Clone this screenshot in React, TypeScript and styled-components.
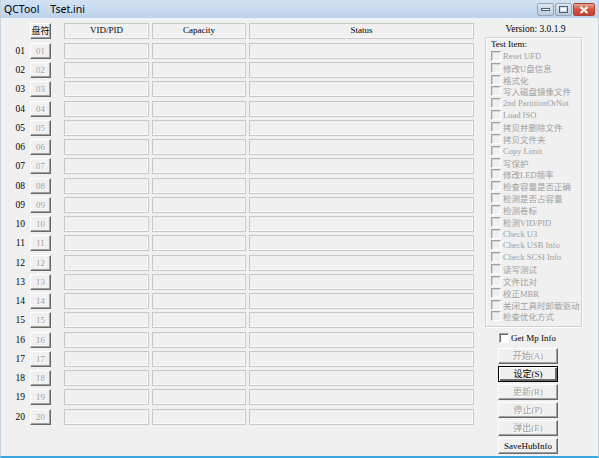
import React from 'react';
import styled, { createGlobalStyle } from 'styled-components';

const GlobalStyle = createGlobalStyle`
  html, body {
    margin: 0;
    padding: 0;
    background: #f0f0f0;
  }
  * { box-sizing: border-box; }
`;

const Window = styled.div`
  width: 599px;
  height: 458px;
  display: flex;
  flex-direction: column;
  background: #f0f0f0;
  border-left: 1px solid #c6d2de;
  border-right: 1px solid #c6d2de;
  border-bottom: 2px solid #3aa6dd;
  overflow: hidden;
  font-family: "Liberation Serif", "Noto Sans CJK SC", serif;
`;

const TitleBar = styled.div`
  height: 18px;
  flex: none;
  display: flex;
  align-items: center;
  padding-left: 3px;
  background: linear-gradient(#d3e2f2, #bcd3ec);
`;

const Title = styled.span`
  font-family: "Noto Sans", "Liberation Sans", sans-serif;
  font-size: 10.5px;
  color: #000;
  white-space: pre;
`;

const WinButtons = styled.div`
  margin-left: auto;
  margin-right: 3px;
  display: flex;
  gap: 1px;
  align-self: flex-start;
  margin-top: 3px;
`;

const WinBtn = styled.div<{ $close?: boolean }>`
  width: ${p => (p.$close ? '22px' : '17px')};
  height: 13px;
  border: 1px solid ${p => (p.$close ? '#a84438' : '#92a6bd')};
  border-radius: 2px;
  background: ${p =>
    p.$close
      ? 'linear-gradient(#e8a493, #d3553f 50%, #c4412a)'
      : 'linear-gradient(#dfe7f0, #cbd7e5 50%, #bccbdc)'};
  display: flex;
  align-items: center;
  justify-content: center;
`;

const Client = styled.div`
  flex: 1;
  display: flex;
  padding-top: 5px;
`;

const Grid = styled.div`
  display: flex;
  flex-direction: column;
  gap: 3.26px;
`;

const Row = styled.div<{ $head?: boolean }>`
  display: flex;
  height: 16px;
  margin-bottom: ${p => (p.$head ? '0.74px' : '0')};
`;

const NumLabel = styled.div`
  width: 28px;
  padding-right: 4px;
  text-align: right;
  font-size: 9.5px;
  line-height: 16px;
  color: #000;
`;

const DriveBtn = styled.div<{ $active?: boolean }>`
  width: 21px;
  height: 16px;
  margin-left: 1px;
  border-top: 1px solid #fff;
  border-left: 1px solid #fff;
  border-right: 1px solid #696969;
  border-bottom: 1px solid #696969;
  box-shadow: inset -1px -1px 0 #a0a0a0;
  font-size: 9px;
  line-height: 14px;
  text-align: center;
  color: ${p => (p.$active ? '#000' : '#a0a0a0')};
  text-shadow: ${p => (p.$active ? 'none' : '1px 1px 0 #fff')};
`;

const Cell = styled.div<{ $w: number; $ml: number }>`
  width: ${p => p.$w}px;
  margin-left: ${p => p.$ml}px;
  height: 16px;
  border: 1px solid #c8c8c8;
  box-shadow: inset -1px -1px 0 #fafafa;
  font-size: 9px;
  line-height: 12px;
  text-align: center;
  color: #000;
`;

const Side = styled.div`
  width: 97px;
  margin-left: 11px;
  display: flex;
  flex-direction: column;
`;

const Version = styled.div`
  height: 13px;
  font-size: 9.5px;
  line-height: 13px;
  text-align: center;
  padding-left: 4px;
  color: #000;
`;

const GroupBox = styled.div`
  height: 290px;
  margin-top: 1px;
  border: 1px solid #d0d0d0;
  box-shadow: inset 1px 1px 0 #fff, 1px 1px 0 #fff;
  padding: 1px 0 0 5px;
`;

const GroupLabel = styled.div`
  height: 11px;
  font-size: 9px;
  line-height: 11px;
  color: #000;
`;

const CheckRow = styled.div<{ $enabled?: boolean }>`
  display: flex;
  align-items: center;
  gap: 2px;
  height: 11.85px;
  font-size: 8.5px;
  white-space: nowrap;
  color: ${p => (p.$enabled ? '#000' : '#a0a0a0')};
`;

const Box = styled.span<{ $enabled?: boolean }>`
  width: 10px;
  height: 10px;
  flex: none;
  border-top: 1px solid #a0a0a0;
  border-left: 1px solid #a0a0a0;
  border-right: 1px solid #fff;
  border-bottom: 1px solid #fff;
  box-shadow: inset 1px 1px 0 ${p => (p.$enabled ? '#696969' : '#d4d4d4')};
  background: ${p => (p.$enabled ? '#fff' : '#f0f0f0')};
`;

const MpRow = styled(CheckRow)`
  margin-top: 5px;
  margin-left: 14px;
  font-size: 9px;
`;

const Buttons = styled.div`
  margin-top: 4px;
  margin-left: 13px;
  display: flex;
  flex-direction: column;
  gap: 2px;
`;

const Button = styled.div<{ $enabled?: boolean; $default?: boolean }>`
  width: 60px;
  height: 16px;
  border-top: 1px solid ${p => (p.$default ? '#000' : '#fff')};
  border-left: 1px solid ${p => (p.$default ? '#000' : '#fff')};
  border-right: 1px solid ${p => (p.$default ? '#000' : '#696969')};
  border-bottom: 1px solid ${p => (p.$default ? '#000' : '#696969')};
  box-shadow: ${p =>
    p.$default
      ? 'inset 1px 1px 0 #fff, inset -2px -2px 0 #696969'
      : 'inset -1px -1px 0 #a0a0a0'};
  font-size: 9px;
  line-height: 14px;
  text-align: center;
  color: ${p => (p.$enabled ? '#000' : '#a0a0a0')};
  text-shadow: ${p => (p.$enabled ? 'none' : '1px 1px 0 #fff')};
`;

const testItems = [
  'Reset UFD',
  '修改U盘信息',
  '格式化',
  '写入磁盘镜像文件',
  '2nd PartitionOrNot',
  'Load ISO',
  '拷贝并删除文件',
  '拷贝文件夹',
  'Copy Limit',
  '写保护',
  '修改LED频率',
  '检查容量是否正确',
  '检测是否占容量',
  '检测卷标',
  '检测VID/PID',
  'Check U3',
  'Check USB Info',
  'Check SCSI Info',
  '读写测试',
  '文件比对',
  '校正MBR',
  '关闭工具时卸载驱动',
  '检查优化方式',
];

const actions = [
  { label: '开始(A)', enabled: false },
  { label: '设定(S)', enabled: true, def: true },
  { label: '更新(R)', enabled: false },
  { label: '停止(P)', enabled: false },
  { label: '弹出(E)', enabled: false },
  { label: 'SaveHubInfo', enabled: true },
];

const rows = Array.from({ length: 20 }, (_, i) => String(i + 1).padStart(2, '0'));

const App = () => {
  return (
    <>
      <GlobalStyle />
      <Window>
        <TitleBar>
          <Title>{'QCTool    Tset.ini'}</Title>
          <WinButtons>
            <WinBtn>
              <svg width="9" height="3" viewBox="0 0 9 3">
                <rect x="0.5" y="0.5" width="8" height="2" fill="#fff" stroke="#4a5f7a" strokeWidth="1" />
              </svg>
            </WinBtn>
            <WinBtn>
              <svg width="9" height="7" viewBox="0 0 9 7">
                <rect x="0.5" y="0.5" width="8" height="6" fill="none" stroke="#4a5f7a" strokeWidth="1" />
                <rect x="2" y="2" width="5" height="3" fill="#fff" />
              </svg>
            </WinBtn>
            <WinBtn $close>
              <svg width="10" height="8" viewBox="0 0 10 8">
                <path d="M1.5 1 L8.5 7 M8.5 1 L1.5 7" stroke="#fff" strokeWidth="2" />
              </svg>
            </WinBtn>
          </WinButtons>
        </TitleBar>
        <Client>
          <Grid>
            <Row $head>
              <NumLabel />
              <DriveBtn $active>盘符</DriveBtn>
              <Cell $w={85} $ml={13}>VID/PID</Cell>
              <Cell $w={94} $ml={3}>Capacity</Cell>
              <Cell $w={225} $ml={3}>Status</Cell>
            </Row>
            {rows.map(n => (
              <Row key={n}>
                <NumLabel>{n}</NumLabel>
                <DriveBtn>{n}</DriveBtn>
                <Cell $w={85} $ml={13} />
                <Cell $w={94} $ml={3} />
                <Cell $w={225} $ml={3} />
              </Row>
            ))}
          </Grid>
          <Side>
            <Version>Version: 3.0.1.9</Version>
            <GroupBox>
              <GroupLabel>Test Item:</GroupLabel>
              {testItems.map(t => (
                <CheckRow key={t}>
                  <Box />
                  <span>{t}</span>
                </CheckRow>
              ))}
            </GroupBox>
            <MpRow $enabled>
              <Box $enabled />
              <span>Get Mp Info</span>
            </MpRow>
            <Buttons>
              {actions.map(a => (
                <Button key={a.label} $enabled={a.enabled} $default={a.def}>
                  {a.label}
                </Button>
              ))}
            </Buttons>
          </Side>
        </Client>
      </Window>
    </>
  );
};

export default App;
